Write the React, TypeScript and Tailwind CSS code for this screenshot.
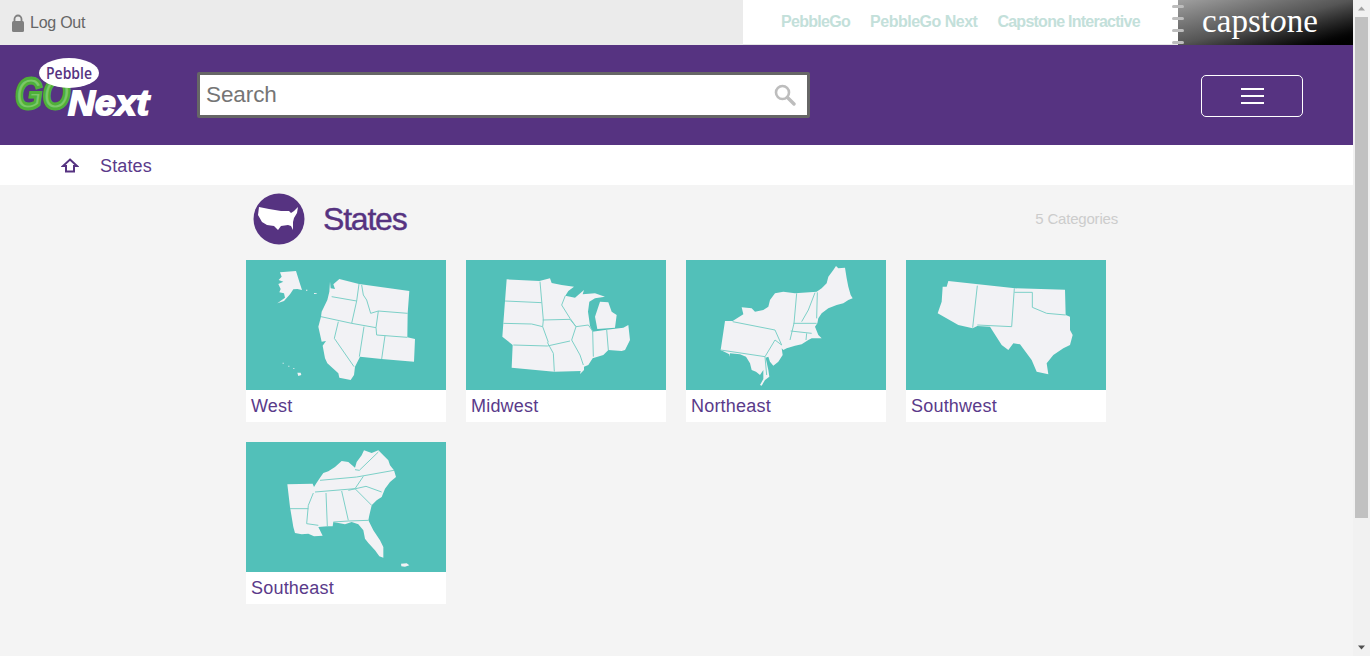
import React from 'react';

const purple = '#563381';

interface MapProps {
  box: string;
  shapes: string[];
  lines: string[];
}

const regions = [
  {
    name: 'West',
    box: '18 225 600 390',
    shapes: [
      '120,262 168,258 178,290 186,315 172,312 160,313 150,328 132,348 112,355 135,338 132,325 118,322 122,312 115,297 130,290 116,285 125,275',
      '270,290 272,310 285,312 280,298 298,282 357,297 508,318 503,385 502,457 525,462 522,530 425,522 360,515 345,545 342,570 332,585 298,578 295,565 262,535 255,520 248,482 258,468 245,470 235,425 243,395 245,380 262,345 268,320',
      '172,563 182,563 184,570 175,573',
      '198,314 202,314 202,317 198,317',
      '222,324 230,325 230,327 222,327',
      '128,533 131,533 131,536 128,536',
      '145,542 148,542 148,545 145,545',
      '160,549 163,549 163,552 160,552',
    ],
    lines: [
      '275,335 350,348',
      '357,297 350,348 335,415',
      '243,395 335,415 408,428',
      '365,300 370,330 380,345 392,385 415,378 503,385',
      '415,378 408,428 410,450 502,457',
      '372,425 358,515',
      '435,452 425,522',
      '295,410 283,460 342,545',
    ],
  },
  {
    name: 'Midwest',
    box: '18 15 600 390',
    shapes: [
      '140,73 238,78 270,70 275,84 305,90 342,95 325,108 316,122 345,128 372,105 368,118 405,115 435,125 405,130 388,140 384,170 390,212 397,230 440,224 490,218 505,210 510,255 495,285 485,288 445,285 430,300 398,310 385,330 372,335 372,345 360,357 362,348 283,350 155,338 158,270 127,245 130,205',
      '420,140 445,142 455,170 470,180 465,218 412,222 405,185',
    ],
    lines: [
      '135,138 245,143',
      '130,205 215,207 248,215 265,262',
      '248,195 330,193 348,215',
      '240,80 250,195 248,215',
      '160,270 262,273 330,258',
      '262,262 280,295 283,350',
      '316,122 305,150 330,190 348,215 335,255 360,300 370,330',
      '348,215 385,210 398,228 400,305',
      '440,224 445,285',
    ],
  },
  {
    name: 'Northeast',
    box: '18 15 600 390',
    shapes: [
      '122,285 135,198 158,198 190,178 185,157 215,160 225,170 250,165 265,155 270,135 285,115 310,110 345,115 410,110 425,100 440,85 445,65 460,45 468,33 475,40 495,38 500,70 505,95 512,120 518,130 505,135 490,145 470,150 445,160 425,175 415,190 412,205 405,215 415,240 425,250 405,250 395,250 385,255 365,268 345,272 320,280 310,285 305,280 308,300 295,320 280,332 270,320 265,305 257,308 265,345 268,365 255,375 245,392 240,390 250,372 250,345 240,360 228,350 215,345 210,325 198,305 180,298 150,295 150,305 148,298',
    ],
    lines: [
      '158,200 285,225 305,270',
      '350,115 342,205 330,255',
      '405,113 385,165 365,200',
      '412,112 410,190',
      '340,205 410,205',
      '332,228 395,235',
      '380,235 378,255',
      '122,285 255,305 285,255 305,270',
      '255,305 260,360',
    ],
  },
  {
    name: 'Southwest',
    box: '18 15 600 390',
    shapes: [
      '145,78 345,100 495,104 497,180 510,185 510,225 518,240 510,270 490,280 460,300 440,325 445,358 410,350 395,315 360,268 340,265 325,285 305,270 270,215 232,213 218,220 175,210 113,175 125,140 128,95 140,95',
    ],
    lines: [
      '232,92 218,218',
      '343,100 335,215 232,210',
      '343,112 397,112 397,157 440,175 497,180',
    ],
  },
  {
    name: 'Southeast',
    box: '18 15 600 390',
    shapes: [
      '142,142 218,140 222,150 228,140 238,125 250,108 265,103 285,90 305,72 325,75 345,92 350,75 365,55 372,40 395,48 415,40 430,55 445,70 450,85 462,100 468,120 450,135 435,155 425,180 410,190 395,205 388,235 385,250 400,280 420,310 430,330 430,362 418,358 405,340 385,318 375,305 370,280 355,262 335,255 315,262 280,255 278,268 262,268 235,270 248,296 222,298 205,290 185,292 165,288 160,270 155,240 150,210',
      '483,380 500,379 508,385 495,389 484,388',
    ],
    lines: [
      '240,130 350,120 462,100',
      '225,165 345,155 370,118',
      '345,98 358,100 415,45',
      '150,215 205,215',
      '220,168 205,205 200,260 235,265',
      '258,168 262,268',
      '305,162 325,250',
      '325,160 378,148 425,165',
      '345,155 395,205',
      '385,250 325,252 280,255',
    ],
  },
];

const StateMap = ({ box, shapes, lines }: MapProps) => (
  <svg viewBox={box} className="block w-[200px] h-[130px] bg-[#52c0b9]">
    {shapes.map((s, i) => (
      <polygon key={i} points={s} fill="#f2f2f5" />
    ))}
    {lines.map((l, i) => (
      <polyline key={i} points={l} fill="none" stroke="#7dd0c8" strokeWidth="3" />
    ))}
  </svg>
);

const Logo = () => (
  <svg width="140" height="60" viewBox="0 0 140 60" className="shrink-0 mb-[16px] overflow-visible">
    <text x="2" y="52" fontFamily="'Liberation Sans', sans-serif" fontWeight="700" fontStyle="italic" fontSize="44" fill="#7cc86a" stroke="#4fb03a" strokeWidth="3" textLength="55" lengthAdjust="spacingAndGlyphs">GO</text>
    <ellipse cx="56" cy="16" rx="30" ry="15" fill="#fff" />
    <text x="56" y="22" textAnchor="middle" fontFamily="'Open Sans', sans-serif" fontWeight="600" fontSize="17" fill={purple} textLength="46" lengthAdjust="spacingAndGlyphs">Pebble</text>
    <text x="55" y="58" fontFamily="'Liberation Sans', sans-serif" fontWeight="700" fontStyle="italic" fontSize="35" fill="#fff" stroke="#fff" strokeWidth="1.8" textLength="81" lengthAdjust="spacingAndGlyphs">Next</text>
  </svg>
);

const Scrollbar = () => (
  <div className="w-[17px] h-[656px] shrink-0 bg-[#f1f1f1] flex flex-col items-center justify-between">
    <div className="flex flex-col items-center w-full">
      <svg width="17" height="17" viewBox="0 0 17 17">
        <path d="M5 10.5 L8.5 6.5 L12 10.5 Z" fill="#a3a3a3" />
      </svg>
      <div className="w-[13px] h-[501px] bg-[#c1c1c1]" />
    </div>
    <svg width="17" height="17" viewBox="0 0 17 17">
      <path d="M5 6.5 L12 6.5 L8.5 10.5 Z" fill="#505050" />
    </svg>
  </div>
);

export default function App() {
  return (
    <div className="flex w-[1370px] h-[656px] overflow-hidden bg-[#f4f4f4] font-['Liberation_Sans',sans-serif]">
      <div className="w-[1353px] shrink-0">
        {/* top strip */}
        <div className="flex h-[45px]">
          <div className="w-[743px] bg-[#ebebeb] flex items-center pl-3 gap-[6px] text-[#666] text-[16px] tracking-[-0.25px]">
            <svg width="12" height="18" viewBox="0 0 12 18">
              <path d="M2.5 8 V5 a3.5 3.5 0 0 1 7 0 V8" fill="none" stroke="#808080" strokeWidth="1.8" />
              <rect x="0" y="7" width="12" height="11" rx="1.5" fill="#808080" />
            </svg>
            <span>Log Out</span>
          </div>
          <div className="flex-1 bg-white flex items-center pl-[38px] gap-5 text-[#c3e0da] text-[16px] font-bold border-b border-[#e6e6e6]">
            <span className="tracking-[-0.7px]">PebbleGo</span>
            <span className="tracking-[-0.5px]">PebbleGo Next</span>
            <span className="tracking-[-0.75px]">Capstone Interactive</span>
          </div>
          <div className="relative w-[175px] h-[45px] bg-gradient-to-br from-[#a0a0a0] via-[#555] to-black flex items-center pl-[24px]">
            <span className="font-['Liberation_Serif',serif] text-[33px] leading-none text-white tracking-[0.05px] pb-[3px]">cap<span>st</span><span className="italic">o</span>ne</span>
            <div className="absolute left-[-6px] top-[5px] flex flex-col gap-[9px]">
              <div className="w-[12px] h-[3px] rounded-sm bg-[#bdbdbd]" />
              <div className="w-[12px] h-[3px] rounded-sm bg-[#bdbdbd]" />
              <div className="w-[12px] h-[3px] rounded-sm bg-[#bdbdbd]" />
              <div className="w-[12px] h-[3px] rounded-sm bg-[#bdbdbd]" />
            </div>
          </div>
        </div>

        {/* purple header */}
        <div className="h-[100px] bg-[#563381] flex items-center pl-[13px] pr-[50px]">
          <Logo />
          <div className="ml-[44px] w-[613px] h-[46px] border-[3px] border-[#666] bg-white flex items-center justify-between pl-[6px] pr-[11px] rounded-[2px]">
            <span className="text-[22.5px] tracking-[-0.1px] text-[#757575]">Search</span>
            <svg width="22" height="22" viewBox="0 0 22 22">
              <circle cx="8.5" cy="8.5" r="6.5" fill="none" stroke="#bdbdbd" strokeWidth="2.6" />
              <path d="M13.5 13.5 L20 20" stroke="#bdbdbd" strokeWidth="3.4" strokeLinecap="round" />
            </svg>
          </div>
          <button className="ml-auto mt-[2px] w-[102px] h-[42px] border border-white rounded-[5px] flex flex-col items-center justify-center gap-[5px]">
            <span className="block w-[23px] h-[2px] bg-white" />
            <span className="block w-[23px] h-[2px] bg-white" />
            <span className="block w-[23px] h-[2px] bg-white" />
          </button>
        </div>

        {/* breadcrumb */}
        <div className="h-[40px] bg-white flex items-center pl-[61px] gap-[21px] text-[18px] text-[#5a3a8a]">
          <svg width="18" height="15" viewBox="0 0 18 15">
            <path d="M9 1.5 L16 8 H13 V13.5 H5 V8 H2 Z" fill="none" stroke="#563381" strokeWidth="2" />
          </svg>
          <span className="pt-[2px] tracking-[0.15px]">States</span>
        </div>

        {/* content */}
        <div className="pl-[246px]">
          <div className="w-[872px] h-[68px] mb-[7px] flex items-center">
            <svg width="52" height="52" viewBox="0 0 52 52" className="ml-[7px] shrink-0">
              <circle cx="26" cy="26" r="25.5" fill="#563381" />
              <path d="M6 14 L16 16 L28 18 L36 18 L38 20 L41 18 L45 14 L44 20 L41 25 L40 29 L40 37 L38 33 L35 32 L28 33 L25 37 L21 33 L14 32 L9 29 L5 22 Z" fill="#fff" />
            </svg>
            <span className="ml-[18px] text-[32px] text-[#563381] tracking-[-1.2px] [-webkit-text-stroke:0.4px_#563381]">States</span>
            <span className="ml-auto text-[15px] text-[#ccc] tracking-[-0.2px]">5 Categories</span>
          </div>
          <div className="grid grid-cols-[repeat(4,200px)] gap-5">
            {regions.map((r) => (
              <div key={r.name} className="bg-white h-[162px]">
                <StateMap box={r.box} shapes={r.shapes} lines={r.lines} />
                <div className="h-[32px] leading-[32px] pl-[5px] text-[18px] tracking-[0.2px] text-[#5a3a8a]">{r.name}</div>
              </div>
            ))}
          </div>
        </div>
      </div>
      <Scrollbar />
    </div>
  );
}
